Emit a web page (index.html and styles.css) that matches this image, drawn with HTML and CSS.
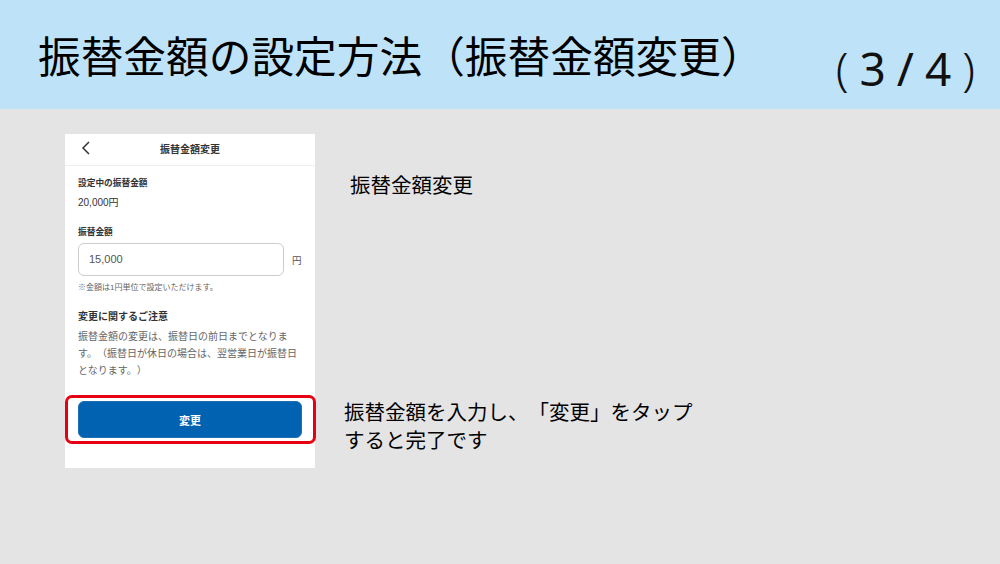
FILE: index.html
```html
<!DOCTYPE html>
<html lang="ja">
<head>
  <meta charset="UTF-8">
  <meta name="viewport" content="width=device-width, initial-scale=1.0">
  <title>振替金額の設定方法</title>
  <link rel="stylesheet" href="styles.css">
</head>
<body>
  <header class="header">
    <h1>振替金額の設定方法（振替金額変更）</h1>
    <p class="page-count">
      <span class="paren">(</span>
      <span>3</span>
      <span>/</span>
      <span>4</span>
      <span class="paren">)</span>
    </p>
  </header>
  <main class="main">
    <section class="phone">
      <div class="phone-bar">
        <svg class="back-icon" width="10" height="14" viewBox="0 0 10 14"><path d="M8 1 L2 7 L8 13" fill="none" stroke="#333" stroke-width="1.5"/></svg>
        <h2>振替金額変更</h2>
      </div>
      <div class="phone-body">
        <h3>設定中の振替金額</h3>
        <p class="current">20,000円</p>
        <h3 class="amount-label">振替金額</h3>
        <div class="amount-row">
          <div class="amount-input">15,000</div>
          <span class="unit">円</span>
        </div>
        <p class="hint">※金額は1円単位で設定いただけます。</p>
        <h3 class="notice-title">変更に関するご注意</h3>
        <p class="notice">振替金額の変更は、振替日の前日までとなります。（振替日が休日の場合は、翌営業日が振替日となります。）</p>
      </div>
      <div class="highlight">
        <button class="submit">変更</button>
      </div>
    </section>
    <section class="notes">
      <p class="note-title">振替金額変更</p>
      <p class="note-text">振替金額を入力し、「変更」をタップ<br>すると完了です</p>
    </section>
  </main>
</body>
</html>
```

FILE: styles.css
```css
* {
  box-sizing: border-box;
}

body {
  font-family: "Liberation Sans", "Noto Sans CJK JP", sans-serif;
  text-spacing-trim: space-all;
  margin: 0;
  width: 1000px;
  height: 564px;
  overflow: hidden;
  background: #e4e4e4;
  color: #000;
}

.header {
  height: 109px;
  background: #bee3f8;
  display: flex;
  justify-content: space-between;
  padding: 0 25px 0 38px;
}

.header h1 {
  margin: 33px 0 0;
  font-size: 42.7px;
  line-height: 50px;
  font-weight: 400;
  white-space: nowrap;
}

.page-count {
  display: flex;
  gap: 11px;
  margin: 36px 0 0;
  font-family: "Noto Sans", sans-serif;
  font-size: 46px;
  line-height: 64px;
  color: #111;
}

.paren {
  font-weight: 300;
}

.main {
  display: flex;
  padding: 25px 0 0 65px;
}

.phone {
  width: 250px;
  height: 334px;
  background: #fff;
  color: #333;
}

.phone-bar {
  height: 32px;
  border-bottom: 1px solid #eee;
  display: flex;
  align-items: center;
  justify-content: center;
  position: relative;
  padding-bottom: 3px;
}

.back-icon {
  position: absolute;
  left: 16px;
  top: 7px;
}

.phone-bar h2 {
  margin: 0;
  font-size: 10px;
  font-weight: 700;
}

.phone-body {
  padding: 10px 13px 0;
}

.phone-body h3 {
  margin: 0;
  font-size: 8.7px;
  line-height: 14px;
  font-weight: 700;
}

.current {
  margin: 6px 0 0;
  font-size: 10px;
  line-height: 14px;
}

.phone-body .amount-label {
  margin-top: 15px;
}

.amount-row {
  display: flex;
  align-items: center;
  margin-top: 4px;
}

.amount-input {
  width: 206px;
  height: 33px;
  border: 1px solid #ccc;
  border-radius: 6px;
  padding-left: 10px;
  font-size: 11px;
  line-height: 30px;
  color: #555;
}

.unit {
  margin-left: 8px;
  font-size: 9.5px;
  color: #555;
}

.hint {
  margin: 6px 0 0;
  font-size: 8px;
  line-height: 12px;
  color: #666;
}

.phone-body .notice-title {
  margin-top: 16px;
  font-size: 10px;
}

.notice {
  margin: 4px 0 0;
  font-size: 10px;
  line-height: 17px;
  color: #666;
}

.highlight {
  width: 251px;
  height: 49px;
  margin-top: 16px;
  border: 3px solid #e60012;
  border-radius: 7px;
  padding: 3px 10px;
}

.submit {
  display: block;
  width: 224px;
  height: 37px;
  border: 1px solid #1f6fb5;
  border-radius: 6px;
  background: #0062b1;
  color: #fff;
  font-family: inherit;
  font-size: 11px;
  font-weight: 700;
}

.notes {
  font-size: 20.5px;
  line-height: 28px;
}

.note-title {
  margin: 38px 0 0 35px;
}

.note-text {
  margin: 199px 0 0 29px;
}
```
